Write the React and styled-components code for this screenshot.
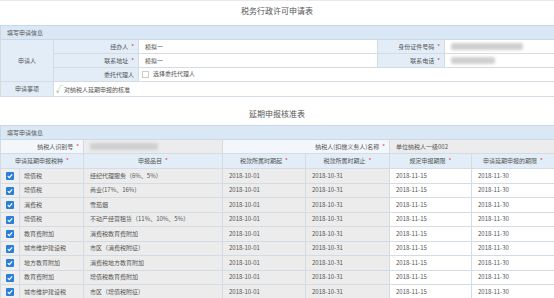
import React from "react";
import styled, { createGlobalStyle } from "styled-components";

const Global = createGlobalStyle`
  html, body { margin: 0; padding: 0; background: #fff; }
  body {
    font-family: "Noto Sans CJK SC", "Liberation Sans", sans-serif;
    color: #555;
    width: 554px;
    overflow: hidden;
  }
`;

const Page = styled.div`
  width: 554px;
  height: 298px;
  overflow: hidden;
  border-top: 1px solid #eaeaea;
  box-sizing: border-box;
`;

const Title = styled.div`
  text-align: center;
  font-size: 8px;
  line-height: 20px;
  height: 20px;
  color: #555;
  margin-top: ${(p) => p.$top}px;
  margin-bottom: ${(p) => p.$bottom}px;
`;

const Table = styled.table`
  width: 554px;
  border-collapse: collapse;
  table-layout: fixed;
  font-size: 6px;
`;

const Band = styled.td`
  background: #dae8f6;
  border: 1px solid #c9d8e6;
  height: ${(p) => p.$h || 13}px;
  padding: 0 0 0 6px;
  text-align: left;
  color: #555;
`;

const Cell = styled.td`
  border: 1px solid #d4dbe2;
  height: ${(p) => p.$h || 13}px;
  padding: 0 ${(p) => (p.$align === "right" ? 4 : 6)}px 0 ${(p) => (p.$align === "right" ? 2 : 6)}px;
  text-align: ${(p) => p.$align || "left"};
  background: ${(p) =>
    p.$tone === "blue" ? "#e2edf8" : p.$tone === "grey" ? "#ececec" : p.$tone === "pale" ? "#f3f7fb" : "#fff"};
  white-space: nowrap;
  overflow: hidden;
  color: #555;
  line-height: 1;
`;

const Star = styled.span`
  color: #e23b3b;
  margin-left: 3px;
`;

const Blur = styled.span`
  display: inline-block;
  vertical-align: middle;
  width: ${(p) => p.$w}px;
  height: 7px;
  background: #cfcfcf;
  filter: blur(1.6px);
  border-radius: 2px;
`;

const EmptyBox = styled.span`
  display: inline-block;
  vertical-align: middle;
  width: 5px;
  height: 5px;
  border: 1px solid #ccc;
  background: #fff;
  margin-right: 4px;
`;

const Tick = styled.span`
  color: #2fa52f;
  font-size: 7px;
  margin-right: 1px;
`;

const CheckWrap = styled.span`
  display: inline-flex;
  vertical-align: middle;
`;

const Checked = () => (
  <CheckWrap>
    <svg width="8" height="8" viewBox="0 0 8 8">
      <rect x="0" y="0" width="8" height="8" rx="1" fill="#2b7fd6" />
      <path d="M1.8 4.1 L3.3 5.6 L6.2 2.4" stroke="#fff" strokeWidth="1.3" fill="none" />
    </svg>
  </CheckWrap>
);

const CheckCell = styled.td`
  border: 1px solid #d4dbe2;
  background: #efefef;
  height: 13.5px;
  padding: 0 0 0 5px;
  text-align: left;
`;

const rows = [
  ["增值税", "经纪代理服务（6%、5%）"],
  ["增值税", "商业(17%、16%)"],
  ["消费税", "雪茄烟"],
  ["增值税", "不动产经营租赁（11%、10%、5%）"],
  ["教育费附加", "消费税教育费附加"],
  ["城市维护建设税", "市区（消费税附征）"],
  ["地方教育附加", "消费税地方教育附加"],
  ["教育费附加", "增值税教育费附加"],
  ["城市维护建设税", "市区（增值税附征）"],
];

export default function App() {
  return (
    <Page>
      <Global />
      <Title $top={0} $bottom={4}>税务行政许可申请表</Title>
      <Table>
        <colgroup>
          <col style={{ width: 53 }} />
          <col style={{ width: 85 }} />
          <col style={{ width: 239 }} />
          <col style={{ width: 67 }} />
          <col style={{ width: 110 }} />
        </colgroup>
        <tbody>
          <tr>
            <Band colSpan={5}>填写申请信息</Band>
          </tr>
          <tr>
            <Cell rowSpan={3} $tone="blue" $align="center">申请人</Cell>
            <Cell $tone="blue" $align="right">经办人<Star>*</Star></Cell>
            <Cell>模拟一</Cell>
            <Cell $tone="blue" $align="right">身份证件号码<Star>*</Star></Cell>
            <Cell $tone="white"><Blur $w={72} /></Cell>
          </tr>
          <tr>
            <Cell $tone="blue" $align="right">联系地址<Star>*</Star></Cell>
            <Cell>模拟一</Cell>
            <Cell $tone="blue" $align="right">联系电话<Star>*</Star></Cell>
            <Cell><Blur $w={44} /></Cell>
          </tr>
          <tr>
            <Cell $tone="blue" $align="right">委托代理人</Cell>
            <Cell colSpan={3} style={{ paddingLeft: 3 }}>
              <EmptyBox />选择委托代理人
            </Cell>
          </tr>
          <tr>
            <Cell $tone="blue" $align="center" $h={14}>申请事项</Cell>
            <Cell colSpan={4} style={{ paddingLeft: 2 }}>
              <Tick>√</Tick>对纳税人延期申报的核准
            </Cell>
          </tr>
        </tbody>
      </Table>

      <Title $top={7} $bottom={1}>延期申报核准表</Title>
      <Table>
        <colgroup>
          <col style={{ width: 19 }} />
          <col style={{ width: 64 }} />
          <col style={{ width: 139 }} />
          <col style={{ width: 83 }} />
          <col style={{ width: 84 }} />
          <col style={{ width: 82 }} />
          <col style={{ width: 83 }} />
        </colgroup>
        <tbody>
          <tr>
            <Band colSpan={7}>填写申请信息</Band>
          </tr>
          <tr>
            <Cell colSpan={2} $tone="pale" $align="right">纳税人识别号<Star>*</Star></Cell>
            <Cell $tone="grey"><Blur $w={68} /></Cell>
            <Cell colSpan={2} $tone="pale" $align="right">纳税人(扣缴义务人)名称<Star>*</Star></Cell>
            <Cell colSpan={2} $tone="grey">单位纳税人一级002</Cell>
          </tr>
          <tr>
            <Cell colSpan={2} $tone="blue" $align="center" $h={14}>申请延期申报税种<Star>*</Star></Cell>
            <Cell $tone="blue" $align="center">申报品目<Star>*</Star></Cell>
            <Cell $tone="blue" $align="center">税款所属时期起<Star>*</Star></Cell>
            <Cell $tone="blue" $align="center">税款所属时期止<Star>*</Star></Cell>
            <Cell $tone="blue" $align="center">规定申报期限<Star>*</Star></Cell>
            <Cell $tone="blue" $align="center">申请延期申报的期限<Star>*</Star></Cell>
          </tr>
          {rows.map(([tax, item], i) => (
            <tr key={i}>
              <CheckCell><Checked /></CheckCell>
              <Cell $tone="grey" $h={13.5} style={{ paddingLeft: 4 }}>{tax}</Cell>
              <Cell $tone="grey" $h={13.5}>{item}</Cell>
              <Cell $tone="grey" $h={13.5}>2018-10-01</Cell>
              <Cell $tone="grey" $h={13.5}>2018-10-31</Cell>
              <Cell $h={13.5}>2018-11-15</Cell>
              <Cell $h={13.5}>2018-11-30</Cell>
            </tr>
          ))}
        </tbody>
      </Table>
    </Page>
  );
}
